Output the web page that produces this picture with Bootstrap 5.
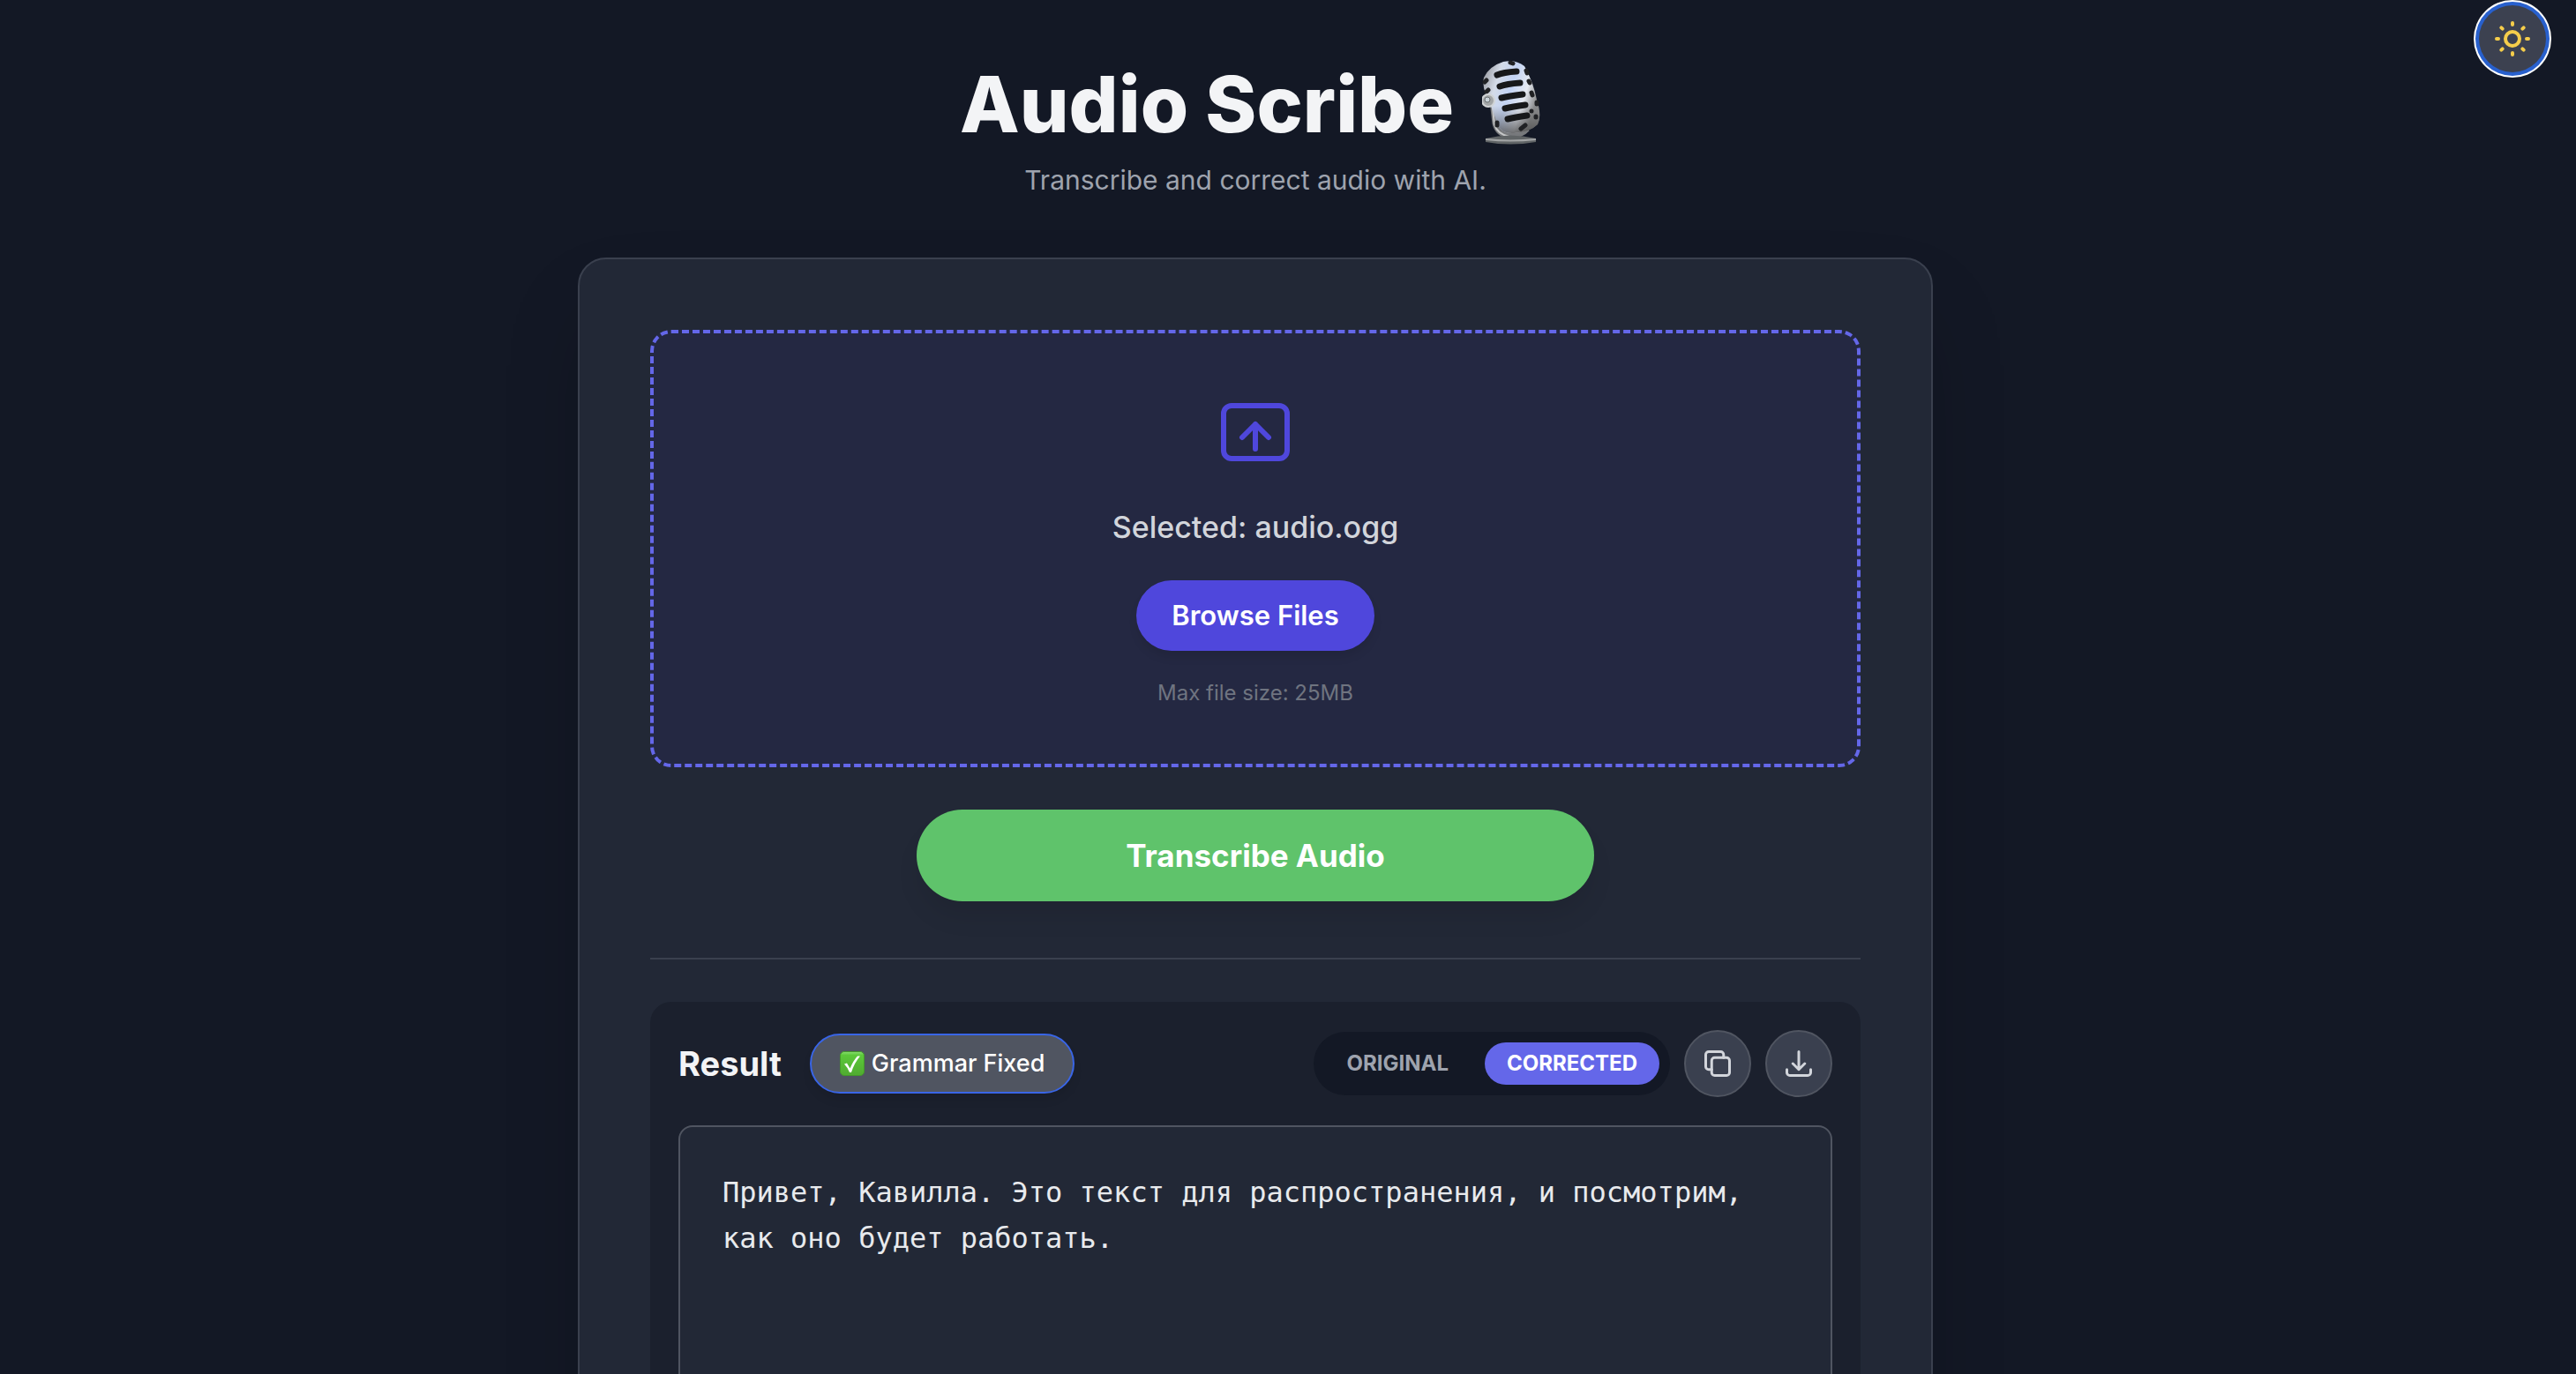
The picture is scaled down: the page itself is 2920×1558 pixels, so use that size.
<!DOCTYPE html>
<html lang="en" data-bs-theme="dark">
<head>
<meta charset="utf-8">
<meta name="viewport" content="width=device-width, initial-scale=1">
<title>Audio Scribe</title>
<link href="https://cdn.jsdelivr.net/npm/bootstrap@5.3.0/dist/css/bootstrap.min.css" rel="stylesheet">
<style>
  :root { --ink: #131825; --panel: #222836; --line: #3a404e; --soft: #505561; --indigo: #6467e9; }
  body { background: var(--ink); color: #f3f4f6; font-family: Inter, "Liberation Sans", sans-serif; }
  .page-row { padding: 0 34px 0 36px; }
  .theme-toggle { width: 76px; height: 76px; margin-top: 6px; background: #3c4150; color: #f5cd4b; box-shadow: 0 0 0 4px #2860cd, 0 0 0 6px #fff; }
  .page-head { padding-top: 62px; margin-bottom: 58px; }
  .page-title { font-size: 88px; line-height: 112px; font-weight: 800; gap: 32px; color: #f3f4f6; }
  .page-sub { font-size: 30px; line-height: 60px; color: #9ea3ae; }
  .sheet { width: 1536px; max-width: 100%; padding: 80px; background: var(--panel); border: 2px solid var(--line); border-radius: 32px; box-shadow: 0 50px 100px -24px rgba(0,0,0,.25); }
  .drop-area { padding: 64px; gap: 32px; background: #242842; border: 4px dashed var(--indigo); border-radius: 24px; }
  .drop-label { font-size: 34px; line-height: 56px; font-weight: 500; color: #d2d5db; }
  .pill-btn { border: 0; border-radius: 999px; color: #fff; }
  .browse-btn { height: 80px; padding: 0 40px; font-size: 31px; line-height: 48px; font-weight: 600; background: #4f47dc; box-shadow: 0 8px 12px -2px rgba(0,0,0,.1); }
  .hint { font-size: 24px; line-height: 32px; color: #6f7480; }
  .go-btn { width: 100%; max-width: 768px; height: 104px; font-size: 35px; font-weight: 700; background: #5fc36b; box-shadow: 0 20px 30px -6px rgba(0,0,0,.1); }
  .rule { height: 2px; margin: 64px 0 48px; background: var(--line); opacity: 1; border: 0; }
  .result-box { padding: 32px; background: #1b202d; border-radius: 24px; }
  .result-head { margin-bottom: 32px; }
  .result-name { gap: 32px; }
  .result-title { font-size: 38px; line-height: 56px; font-weight: 700; color: #f3f4f6; }
  .fixed-btn { height: 68px; padding: 0 32px; gap: 8px; border: 2px solid #3965e6; background: #505561; font-size: 27px; line-height: 40px; font-weight: 500; box-shadow: 0 8px 12px -2px rgba(0,0,0,.1); }
  .switcher { padding: 12px; gap: 16px; background: var(--ink); border-radius: 999px; }
  .switcher .pill-btn { height: 48px; padding: 0 25px; font-size: 24px; line-height: 32px; font-weight: 700; color: #9ea3ae; background: none; }
  .switcher .pill-btn.active { background: var(--indigo); color: #fff; }
  .tool-btn { width: 76px; height: 76px; background: #3a404f; border: 2px solid var(--soft); color: #d2d5db; }
  .transcript { height: 600px; padding: 48px; resize: none; background: var(--panel); border: 2px solid var(--soft); border-radius: 16px; color: #e8eaed; font: 32px/52px "DejaVu Sans Mono", monospace; }
</style>
<script src="https://cdn.jsdelivr.net/npm/bootstrap@5.3.0/dist/js/bootstrap.bundle.min.js"></script>
</head>
<body class="vh-100 overflow-hidden">
<div class="page-row d-flex align-items-start">
  <main class="flex-grow-1 d-flex flex-column align-items-center">
    <header class="page-head text-center">
      <h1 class="page-title d-flex align-items-center justify-content-center mb-0">Audio Scribe
        <svg class="mb-1" width="78" height="96" viewBox="0 0 78 96" role="img" aria-label="Studio microphone">
          <defs>
            <linearGradient id="steel" x1="0" y1="0" x2="1" y2="0.4"><stop offset="0" stop-color="#8c8d92"/><stop offset=".3" stop-color="#d4dbe8"/><stop offset=".55" stop-color="#c3d3f3"/><stop offset=".8" stop-color="#e6eaf2"/><stop offset="1" stop-color="#8b8c8d"/></linearGradient>
            <linearGradient id="shade" x1="0" y1="0" x2="0" y2="1"><stop offset=".62" stop-color="#555" stop-opacity="0"/><stop offset="1" stop-color="#444" stop-opacity=".75"/></linearGradient>
          </defs>
          <path d="M12 46 15 72Q18 84 31 86Q45 85 51 78" fill="none" stroke="#77797c" stroke-width="7"/>
          <path d="M11 46 14 73Q17 84 31 87" fill="none" stroke="#c6c7c8" stroke-width="2"/>
          <path d="M2 20Q8 7 24 2Q38-1 48 7Q58 25 62 45Q68 63 63 73Q54 82 36 83Q23 84 18 74Q10 51 4 38Q0 28 2 20Z" fill="url(#steel)"/>
          <path d="M2 20Q8 7 24 2Q38-1 48 7Q58 25 62 45Q68 63 63 73Q54 82 36 83Q23 84 18 74Q10 51 4 38Q0 28 2 20Z" fill="url(#shade)"/>
          <g stroke="#17181a" stroke-width="7" stroke-linecap="round" fill="none">
            <path d="M17 17Q24 14 39 13M20 30Q28 27 43 26M22 43Q30 41 46 39M26 55Q34 53 49 51M29 67Q37 65 51 63"/>
          </g>
          <g stroke="#202124" stroke-width="5" stroke-linecap="round"><path d="M3 25 5 23M5 36 7 34M50 12 51 15M53 24 54 26M56 37 57 40M62 48 62 50M56 58V58M61 64V65M44 78 49 74M32 3 35 4M17 71V74"/></g>
          <circle cx="7" cy="46" r="7" fill="#a3a6a7" stroke="#d0d3d5" stroke-width="2"/><circle cx="6" cy="45" r="3" fill="#c9d2d8" stroke="#686d70"/>
          <path d="M4 89Q32 82 61 89V93Q32 98 4 93Z" fill="#606466"/><path d="M4 90Q32 93 61 90" fill="none" stroke="#a2a4a5" stroke-width="2"/>
        </svg>
      </h1>
      <p class="page-sub mb-0">Transcribe and correct audio with AI.</p>
    </header>
    <section class="sheet">
      <div class="drop-area d-flex flex-column align-items-center">
        <svg width="96" height="96" viewBox="0 0 24 24" fill="none" stroke="#4f47dc" stroke-width="1.5" stroke-linecap="round" stroke-linejoin="round" aria-hidden="true"><rect x="3" y="4.5" width="18" height="15" rx="2.25"/><path d="M12 16.75V9.75M8.25 13.5 12 9.75l3.75 3.75"/></svg>
        <p class="drop-label mb-0">Selected: audio.ogg</p>
        <button type="button" class="pill-btn browse-btn">Browse Files</button>
        <p class="hint mb-0">Max file size: 25MB</p>
      </div>
      <div class="d-flex justify-content-center mt-5"><button type="button" class="pill-btn go-btn">Transcribe Audio</button></div>
      <hr class="rule">
      <div class="result-box">
        <div class="result-head d-flex align-items-center justify-content-between">
          <div class="result-name d-flex align-items-center">
            <h2 class="result-title mb-0">Result</h2>
            <button type="button" class="pill-btn fixed-btn d-flex align-items-center">
              <svg width="28" height="28" viewBox="0 0 28 28" aria-hidden="true">
                <defs><linearGradient id="leaf" x1="0" y1="0" x2="0" y2="1"><stop offset="0" stop-color="#8ade72"/><stop offset=".15" stop-color="#5cc83a"/><stop offset="1" stop-color="#50ab30"/></linearGradient></defs>
                <rect x=".5" y=".5" width="27" height="27" rx="4.5" fill="url(#leaf)" stroke="#449a2a"/><path d="M5 14.5 8 13.5 11.5 19.5Q15 11 20 5.500L23 5.500Q16.500 13 13 24H11Q8.500 18 5 14.500Z" fill="#fff"/></svg>
              Grammar Fixed</button>
          </div>
          <div class="d-flex align-items-center gap-3">
            <div class="switcher d-flex" role="group" aria-label="Version"><button type="button" class="pill-btn">ORIGINAL</button><button type="button" class="pill-btn active">CORRECTED</button></div>
            <button type="button" class="tool-btn rounded-circle d-flex align-items-center justify-content-center p-0" aria-label="Copy">
              <svg width="36" height="36" viewBox="0 0 24 24" fill="none" stroke="currentColor" stroke-width="2" stroke-linecap="round" stroke-linejoin="round"><rect x="7.500" y="7.500" width="13.500" height="13.500" rx="2.250"/><path d="M16.500 7.500V5.250A2.250 2.250 0 0 0 14.250 3H5.250A2.250 2.250 0 0 0 3 5.250v9a2.250 2.250 0 0 0 2.250 2.250H7.500"/></svg>
            </button>
            <button type="button" class="tool-btn rounded-circle d-flex align-items-center justify-content-center p-0" aria-label="Download">
              <svg width="36" height="36" viewBox="0 0 24 24" fill="none" stroke="currentColor" stroke-width="2" stroke-linecap="round" stroke-linejoin="round"><path d="M3 16.500v2.250A2.250 2.250 0 0 0 5.250 21h13.500A2.250 2.250 0 0 0 21 18.750V16.500M16.500 12 12 16.500 7.500 12M12 16.500V3"/></svg>
            </button>
          </div>
        </div>
        <textarea class="transcript w-100 d-block" aria-label="Transcript">Привет, Кавилла. Это текст для распространения, и посмотрим, как оно будет работать.</textarea>
      </div>
    </section>
  </main>
  <button type="button" class="theme-toggle flex-shrink-0 border-0 rounded-circle p-0 d-flex align-items-center justify-content-center" aria-label="Light theme">
    <svg width="48" height="48" viewBox="-24 -24 48 48" fill="none" stroke="currentColor" stroke-width="4" stroke-linecap="round"><circle r="8"/><path d="M0-18V-16M0 18V16M-18 0H-16M18 0H16M-12.700-12.700-11.300-11.300M12.700-12.700 11.300-11.300M-12.700 12.700-11.300 11.300M12.700 12.700 11.300 11.300"/></svg>
  </button>
</div>
</body>
</html>
